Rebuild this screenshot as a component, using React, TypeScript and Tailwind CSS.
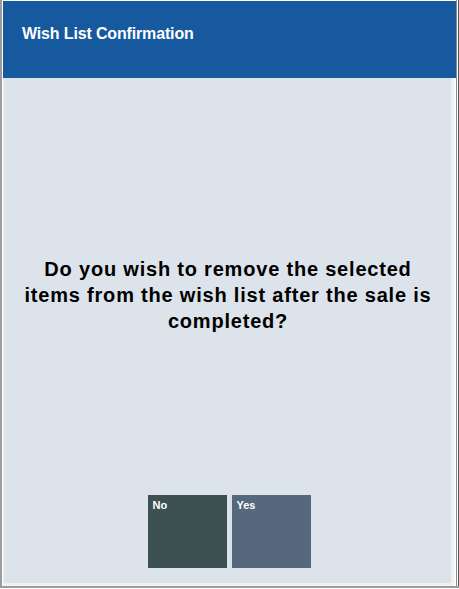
import React from "react";

export default function App() {
  return (
    <div className="w-[459px] h-[589px] bg-white flex overflow-hidden" style={{ fontFamily: '"Liberation Sans", Arial, sans-serif' }}>
      <div className="w-[2px] h-[588px] bg-[#9c9c9c]" />
      <div className="flex-1 flex flex-col">
        <div className="flex flex-1">
          <div className="flex-1 flex flex-col pt-[1px] pl-[1px]">
            <div className="h-[77px] bg-[#17599f] pl-[19px] pt-[24px]">
              <div className="text-white font-bold text-[16px] leading-[18px] tracking-[-0.15px]">Wish List Confirmation</div>
            </div>
            <div className="flex-1 flex border-b-[3px] border-[#eef1f4] mr-[2px]">
              <div className="flex-1 bg-[#dce3ea] flex flex-col border-l-[2px] border-[#e4e9ee]">
                <div className="pt-[178px] px-[15px] text-center text-black font-bold text-[20px] leading-[26px] tracking-[0.8px]">
                  Do you wish to remove the selected items from the wish list after the sale is completed?
                </div>
                <div className="flex-1" />
                <div className="flex justify-center gap-[5px] pl-[2px] pb-[15px]">
                  <div className="w-[79px] h-[73px] bg-[#3d5052] text-white font-bold text-[11px] leading-[13px] pl-[5px] pt-[4px]">No</div>
                  <div className="w-[79px] h-[73px] bg-[#55687e] text-white font-bold text-[11px] leading-[13px] pl-[5px] pt-[4px]">Yes</div>
                </div>
              </div>
              <div className="w-[3px] bg-[#eef1f4]" />
            </div>
          </div>
          <div className="w-[1px] bg-[#8c8c8c]" />
          <div className="w-[1px] bg-white" />
          <div className="w-[1px] bg-[#555]" />
        </div>
        <div className="h-[2px] bg-[#9c9c9c]" />
        <div className="h-[1px] bg-white" />
      </div>
    </div>
  );
}
